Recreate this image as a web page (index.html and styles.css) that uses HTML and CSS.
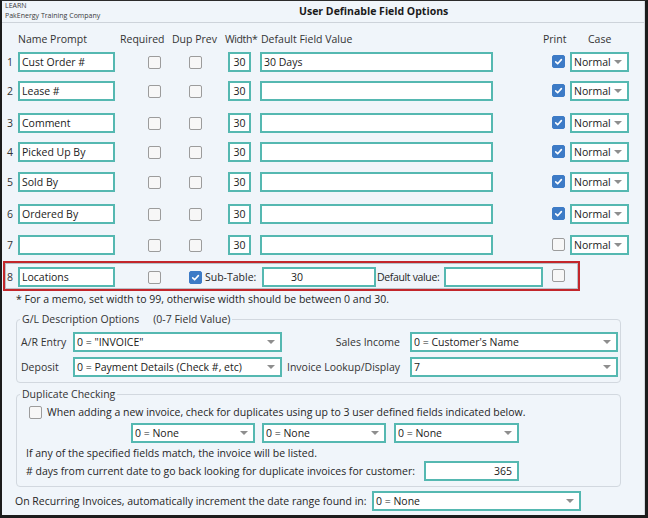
FILE: index.html
```html
<!DOCTYPE html>
<html>
<head>
<meta charset="utf-8">
<title>User Definable Field Options</title>
<link rel="stylesheet" href="styles.css">
</head>
<body>
<div class="win">
  <div class="panel">
    <div class="hdr">
      <div class="co"><div>LEARN</div><div>PakEnergy Training Company</div></div>
      <div class="title">User Definable Field Options</div>
    </div>

    <div class="cols">
      <span class="h-name">Name Prompt</span>
      <span class="h-req">Required</span>
      <span class="h-dup">Dup Prev</span>
      <span class="h-w">Width*</span>
      <span class="h-dv">Default Field Value</span>
      <span class="h-pr">Print</span>
      <span class="h-case">Case</span>
    </div>

    <div class="rows">
      <div class="row">
        <span class="num">1</span>
        <div class="tb name">Cust Order #</div>
        <span class="cb req"></span>
        <span class="cb dup"></span>
        <div class="tb wd">30</div>
        <div class="tb dv">30 Days</div>
        <span class="cb on pr"><svg viewBox="0 0 13 13"><path d="M3.2 6.9l2.3 2.3 4.4-4.9"/></svg></span>
        <div class="sel case"><span class="val">Normal</span><span class="arr"></span></div>
      </div>
      <div class="row">
        <span class="num">2</span>
        <div class="tb name">Lease #</div>
        <span class="cb req"></span>
        <span class="cb dup"></span>
        <div class="tb wd">30</div>
        <div class="tb dv"></div>
        <span class="cb on pr"><svg viewBox="0 0 13 13"><path d="M3.2 6.9l2.3 2.3 4.4-4.9"/></svg></span>
        <div class="sel case"><span class="val">Normal</span><span class="arr"></span></div>
      </div>
      <div class="row">
        <span class="num">3</span>
        <div class="tb name">Comment</div>
        <span class="cb req"></span>
        <span class="cb dup"></span>
        <div class="tb wd">30</div>
        <div class="tb dv"></div>
        <span class="cb on pr"><svg viewBox="0 0 13 13"><path d="M3.2 6.9l2.3 2.3 4.4-4.9"/></svg></span>
        <div class="sel case"><span class="val">Normal</span><span class="arr"></span></div>
      </div>
      <div class="row">
        <span class="num">4</span>
        <div class="tb name">Picked Up By</div>
        <span class="cb req"></span>
        <span class="cb dup"></span>
        <div class="tb wd">30</div>
        <div class="tb dv"></div>
        <span class="cb on pr"><svg viewBox="0 0 13 13"><path d="M3.2 6.9l2.3 2.3 4.4-4.9"/></svg></span>
        <div class="sel case"><span class="val">Normal</span><span class="arr"></span></div>
      </div>
      <div class="row">
        <span class="num">5</span>
        <div class="tb name">Sold By</div>
        <span class="cb req"></span>
        <span class="cb dup"></span>
        <div class="tb wd">30</div>
        <div class="tb dv"></div>
        <span class="cb on pr"><svg viewBox="0 0 13 13"><path d="M3.2 6.9l2.3 2.3 4.4-4.9"/></svg></span>
        <div class="sel case"><span class="val">Normal</span><span class="arr"></span></div>
      </div>
      <div class="row">
        <span class="num">6</span>
        <div class="tb name">Ordered By</div>
        <span class="cb req"></span>
        <span class="cb dup"></span>
        <div class="tb wd">30</div>
        <div class="tb dv"></div>
        <span class="cb on pr"><svg viewBox="0 0 13 13"><path d="M3.2 6.9l2.3 2.3 4.4-4.9"/></svg></span>
        <div class="sel case"><span class="val">Normal</span><span class="arr"></span></div>
      </div>
      <div class="row">
        <span class="num">7</span>
        <div class="tb name"></div>
        <span class="cb req"></span>
        <span class="cb dup"></span>
        <div class="tb wd">30</div>
        <div class="tb dv"></div>
        <span class="cb pr"></span>
        <div class="sel case"><span class="val">Normal</span><span class="arr"></span></div>
      </div>
    </div>

    <div class="sub">
      <span class="num n8">8</span>
      <div class="tb name">Locations</div>
      <span class="cb req"></span>
      <span class="cb on dup"><svg viewBox="0 0 13 13"><path d="M3.2 6.9l2.3 2.3 4.4-4.9"/></svg></span>
      <span class="lbl-st">Sub-Table:</span>
      <div class="tb st">30</div>
      <span class="lbl-dv">Default value:</span>
      <div class="tb sdv"></div>
      <span class="cb pr8"></span>
    </div>

    <p class="note">* For a memo, set width to 99, otherwise width should be between 0 and 30.</p>

    <fieldset class="grp gl">
      <legend>G/L Description Options<span class="lg2">(0-7 Field Value)</span></legend>
      <div class="glgrid">
        <span class="l">A/R Entry</span>
        <div class="sel"><span class="val">0 = "INVOICE"</span><span class="arr"></span></div>
        <span class="r">Sales Income</span>
        <div class="sel"><span class="val">0 = Customer's Name</span><span class="arr"></span></div>
        <span class="l">Deposit</span>
        <div class="sel"><span class="val">0 = Payment Details (Check #, etc)</span><span class="arr"></span></div>
        <span class="r">Invoice Lookup/Display</span>
        <div class="sel"><span class="val">7</span><span class="arr"></span></div>
      </div>
    </fieldset>

    <fieldset class="grp dupg">
      <legend>Duplicate Checking</legend>
      <div class="dupin">
        <div class="chkline"><span class="cb"></span><span>When adding a new invoice, check for duplicates using up to 3 user defined fields indicated below.</span></div>
        <div class="sels">
          <div class="sel s1"><span class="val">0 = None</span><span class="arr"></span></div>
          <div class="sel s2"><span class="val">0 = None</span><span class="arr"></span></div>
          <div class="sel s3"><span class="val">0 = None</span><span class="arr"></span></div>
        </div>
        <p class="ifany">If any of the specified fields match, the invoice will be listed.</p>
        <div class="days"><span class="dl"># days from current date to go back looking for duplicate invoices for customer:</span><div class="tb dn">365</div></div>
      </div>
    </fieldset>

    <div class="recur">
      <span class="rl">On Recurring Invoices, automatically increment the date range found in:</span>
      <div class="sel rs"><span class="val">0 = None</span><span class="arr"></span></div>
    </div>
  </div>
</div>
</body>
</html>
```

FILE: styles.css
```css
* { box-sizing: border-box; }
html, body { margin: 0; padding: 0; }
body {
  width: 648px;
  height: 518px;
  overflow: hidden;
  background: #f0f5fa;
  font-family: "Open Sans", "Noto Sans", sans-serif;
  font-size: 10.5px;
  line-height: 14px;
  color: #262626;
}
.win {
  width: 648px;
  height: 518px;
  border-top: 1px solid #2b2b2b;
  border-left: 2px solid #1c1c1c;
  border-right: 3px solid #1c1c1c;
  border-bottom: 3px solid #1c1c1c;
  background: #f0f5fa;
}
.panel {
  height: 100%;
  border-right: 1px solid #d3d9df;
}

/* header */
.hdr {
  height: 22px;
  display: flex;
  border-bottom: 1px solid #cdd3da;
}
.co {
  flex: 0 0 297px;
  font-size: 7px;
  line-height: 10px;
  color: #3a3a3a;
  padding-left: 3px;
}
.title {
  font-weight: 700;
  font-size: 10.5px;
  line-height: 20px;
  color: #1a1a1a;
}

/* column headings */
.cols {
  display: flex;
  margin-top: 9px;
  height: 14px;
  padding-left: 16px;
  color: #333;
  white-space: nowrap;
}
.h-name { width: 102px; }
.h-req { width: 52px; }
.h-dup { width: 53px; }
.h-w { width: 36px; letter-spacing: -0.4px; }
.h-dv { width: 282px; }
.h-pr { width: 45px; }

/* rows */
.rows {
  margin-top: 6px;
  display: grid;
  grid-template-rows: 29px 32px 29px 30px 32px 31px 20px;
}
.row {
  display: flex;
  align-items: flex-start;
  height: 20px;
}
.num {
  flex: 0 0 16px;
  padding-left: 5px;
  line-height: 20px;
  color: #333;
}
.tb {
  height: 20px;
  background: #fff;
  border: 2px solid #55b8b1;
  padding: 0 2px;
  line-height: 16px;
  color: #1a1a1a;
  white-space: nowrap;
  overflow: hidden;
}
.name { width: 97px; }
.wd { width: 23px; margin-left: 26px; text-align: center; padding: 0; }
.dv { width: 233px; margin-left: 9px; }

.cb {
  flex: 0 0 13px;
  width: 13px;
  height: 13px;
  border: 1px solid #9c9c9c;
  border-radius: 2px;
  background: #f7f7f7;
  display: block;
}
.cb.on {
  background: #3d7bc6;
  border-color: #3d7bc6;
}
.cb svg { display: block; width: 11px; height: 11px; }
.cb svg path { fill: none; stroke: #fff; stroke-width: 1.9; stroke-linecap: round; stroke-linejoin: round; }
.row .cb { margin-top: 4px; }
.req { margin-left: 33px; }
.dup { margin-left: 28px; }
.row .pr { margin-left: 59px; margin-top: 3px; }
.case { width: 59px; margin-left: 5px; }

.sel {
  height: 20px;
  background: #fff;
  border: 2px solid #55b8b1;
  display: flex;
  align-items: center;
  padding: 0 4px 0 2px;
  color: #1a1a1a;
}
.sel .val { flex: 1; white-space: nowrap; overflow: hidden; line-height: 16px; }
.sel .arr {
  flex: 0 0 auto;
  width: 0;
  height: 0;
  border-left: 4px solid transparent;
  border-right: 4px solid transparent;
  border-top: 4px solid #8e8e8e;
  margin-right: 1px;
}

/* row 8 */
.sub {
  margin-top: 6px;
  margin-left: 1px;
  width: 577px;
  height: 30px;
  border: 2px solid #c3262b;
  box-shadow: inset 0 0 0 1px #b9c0c7;
  display: flex;
  align-items: flex-start;
  padding-top: 4px;
  white-space: nowrap;
}
.num.n8 { flex: 0 0 13px; padding-left: 2px; }
.sub .cb { margin-top: 4px; }
.lbl-st { flex: 0 0 60px; padding-left: 3px; line-height: 20px; }
.st { flex: 0 0 114px; padding-left: 27px; }
.lbl-dv { flex: 0 0 68px; padding-left: 1px; line-height: 20px; letter-spacing: -0.35px; }
.sdv { flex: 0 0 99px; }
.sub .pr8 { margin-left: 9px; margin-top: 2px; }

.note {
  margin: 1px 0 0 14px;
  line-height: 14px;
}

/* group boxes */
.grp {
  margin: 6px 0 0 14px;
  width: 605px;
  min-width: 0;
  padding: 0;
  border: 1px solid #d2d8df;
  border-radius: 4px;
}
.grp legend {
  margin-left: 3px;
  padding: 0 2px;
  line-height: 14px;
  color: #333;
}
.lg2 { margin-left: 14px; }
.glgrid {
  display: grid;
  grid-template-columns: 52px 209px 128px 208px;
  grid-auto-rows: 20px;
  row-gap: 5px;
  padding: 6px 0 5px 4px;
  align-items: center;
}
.glgrid .l { color: #333; }
.glgrid .r { text-align: right; padding-right: 10px; color: #333; }

.dupg { margin-top: 4px; }
.dupin { padding: 4px 0 5px 9px; }
.chkline { display: flex; align-items: center; height: 14px; }
.chkline .cb { margin-left: 3px; margin-right: 5px; }
.sels { display: flex; margin-top: 4px; padding-left: 105px; }
.s1 { width: 124px; }
.s2 { width: 124px; margin-left: 7px; }
.s3 { width: 125px; margin-left: 8px; }
.ifany { margin: 3px 0 0; line-height: 14px; }
.days { display: flex; align-items: center; margin-top: 1px; }
.dl { width: 398px; white-space: nowrap; }
.dn { width: 95px; text-align: right; padding-right: 5px; }

.recur {
  display: flex;
  align-items: center;
  margin-top: 4px;
  padding-left: 13px;
}
.rl { width: 357px; white-space: nowrap; }
.rs { width: 209px; }
```
